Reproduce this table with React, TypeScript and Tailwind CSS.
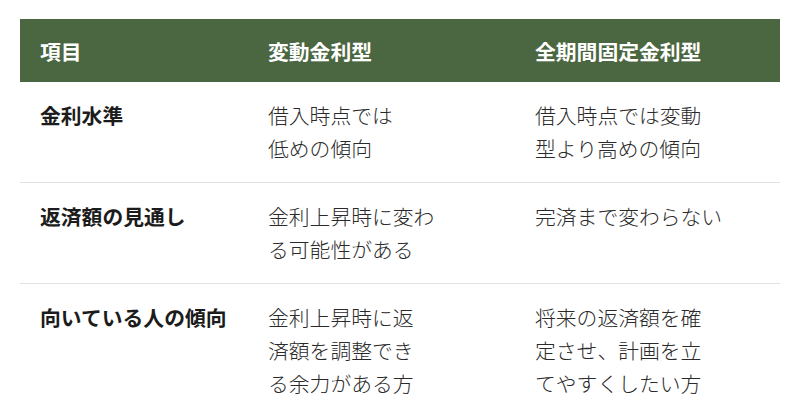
const rows = [
	{
		label: '金利水準',
		variable: ['借入時点では', '低めの傾向'],
		fixed: ['借入時点では変動', '型より高めの傾向'],
	},
	{
		label: '返済額の見通し',
		variable: ['金利上昇時に変わ', 'る可能性がある'],
		fixed: ['完済まで変わらない'],
	},
	{
		label: '向いている人の傾向',
		variable: ['金利上昇時に返', '済額を調整でき', 'る余力がある方'],
		fixed: ['将来の返済額を確', '定させ、計画を立', 'てやすくしたい方'],
	},
];

const Lines = ({ lines }: { lines: string[] }) => (
	<>
		{lines.map((l) => (
			<span key={l} className="block whitespace-nowrap">
				{l}
			</span>
		))}
	</>
);

const App = () => {
	return (
		<div
			className="min-h-[412px] bg-white px-5 pt-[19px] text-[20.8px] leading-[33px]"
			style={{ fontFamily: '"Noto Sans CJK JP", "Noto Sans", sans-serif' }}
		>
			<table className="w-full table-fixed border-collapse">
				<colgroup>
					<col className="w-[228px]" />
					<col className="w-[267px]" />
					<col />
				</colgroup>
				<thead>
					<tr className="bg-[#4b6741] text-left text-white">
						<th className="h-[63px] px-5 pt-[2px] font-bold">項目</th>
						<th className="h-[63px] px-5 pt-[2px] font-bold">変動金利型</th>
						<th className="h-[63px] px-5 pt-[2px] font-bold">全期間固定金利型</th>
					</tr>
				</thead>
				<tbody>
					{rows.map((r) => (
						<tr key={r.label} className="border-b border-[#e3e3e3] align-top last:border-b-0">
							<td className="px-5 py-[17px] font-bold text-[#1c1c1c]">{r.label}</td>
							<td className="px-5 py-[17px] font-light text-[#2a2a2a]">
								<Lines lines={r.variable} />
							</td>
							<td className="px-5 py-[17px] font-light text-[#2a2a2a]">
								<Lines lines={r.fixed} />
							</td>
						</tr>
					))}
				</tbody>
			</table>
		</div>
	);
};

export default App;
